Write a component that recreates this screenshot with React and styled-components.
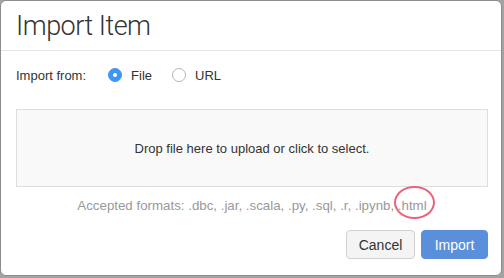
import React, { useState } from 'react'
import styled, { createGlobalStyle } from 'styled-components'

const GlobalStyle = createGlobalStyle`
  html, body {
    margin: 0;
    padding: 0;
    background: #a3a3a3;
    overflow: hidden;
  }
  body {
    font-family: "Helvetica Neue", Helvetica, "Liberation Sans", Arial, sans-serif;
    color: #333;
  }
`

const Modal = styled.div`
  box-sizing: border-box;
  width: 502px;
  height: 276px;
  background: #fff;
  border: 1px solid #8c8c8c;
  border-radius: 6px;
  display: flex;
  flex-direction: column;
`

const Header = styled.div`
  height: 49px;
  border-bottom: 1px solid #e5e5e5;
  padding: 0 15px;
  display: flex;
  align-items: center;
`

const Title = styled.h3`
  margin: 0;
  font-family: Roboto, "Liberation Sans", Arial, sans-serif;
  font-size: 27px;
  letter-spacing: -0.5px;
  font-weight: 300;
  color: #333;
  line-height: 1;
  padding-top: 2px;
`

const Body = styled.div`
  padding: 0 13px 0 15px;
  display: flex;
  flex-direction: column;
`

const SourceRow = styled.div`
  margin-top: 14px;
  height: 20px;
  display: flex;
  align-items: center;
  font-size: 13px;
`

const SourceLabel = styled.span`
  margin-right: 22px;
`

const Option = styled.label`
  display: flex;
  align-items: center;
  margin-right: 20px;
  cursor: pointer;
`

const Dot = styled.span`
  box-sizing: border-box;
  width: 14px;
  height: 14px;
  border-radius: 50%;
  margin-right: 9px;
  display: flex;
  align-items: center;
  justify-content: center;
  background: ${p => (p.$on ? '#3f95f5' : '#fff')};
  border: 1px solid ${p => (p.$on ? '#3f95f5' : '#b5b5b5')};

  &::after {
    content: '';
    width: 4px;
    height: 4px;
    border-radius: 50%;
    background: #fff;
    display: ${p => (p.$on ? 'block' : 'none')};
  }
`

const DropZone = styled.div`
  box-sizing: border-box;
  margin-top: 24px;
  height: 78px;
  background: #f9f9f9;
  border: 1px solid #dedede;
  display: flex;
  align-items: center;
  justify-content: center;
  font-size: 13px;
  color: #333;
  cursor: pointer;
`

const Formats = styled.div`
  margin-top: 10px;
  height: 18px;
  line-height: 18px;
  text-align: center;
  font-size: 13.3px;
  color: #999;
`

const Circled = styled.span`
  position: relative;

  &::after {
    content: '';
    position: absolute;
    left: -4px;
    right: -8px;
    top: -12px;
    bottom: -6px;
    border: 2px solid #e8647c;
    border-radius: 50%;
  }
`

const Footer = styled.div`
  margin-top: 15px;
  display: flex;
  justify-content: flex-end;
  gap: 6px;
`

const Button = styled.button`
  box-sizing: border-box;
  width: ${p => p.$w}px;
  height: 29px;
  padding: 0;
  font-family: inherit;
  font-size: 14px;
  border-radius: 4px;
  border: 1px solid ${p => (p.$primary ? '#5a8fdc' : '#d0d0d0')};
  background: ${p => (p.$primary ? '#5a8fdc' : '#f4f4f4')};
  color: ${p => (p.$primary ? '#fff' : '#333')};
  cursor: pointer;
`

export default function App() {
  const [source, setSource] = useState('file')

  return (
    <>
      <GlobalStyle />
      <Modal>
        <Header>
          <Title>Import Item</Title>
        </Header>
        <Body>
          <SourceRow>
            <SourceLabel>Import from:</SourceLabel>
            <Option onClick={() => setSource('file')}>
              <Dot $on={source === 'file'} />
              File
            </Option>
            <Option onClick={() => setSource('url')}>
              <Dot $on={source === 'url'} />
              URL
            </Option>
          </SourceRow>
          <DropZone>Drop file here to upload or click to select.</DropZone>
          <Formats>
            Accepted formats: .dbc, .jar, .scala, .py, .sql, .r, .ipynb, <Circled>.html</Circled>
          </Formats>
          <Footer>
            <Button $w={69}>Cancel</Button>
            <Button $primary $w={67}>Import</Button>
          </Footer>
        </Body>
      </Modal>
    </>
  )
}
